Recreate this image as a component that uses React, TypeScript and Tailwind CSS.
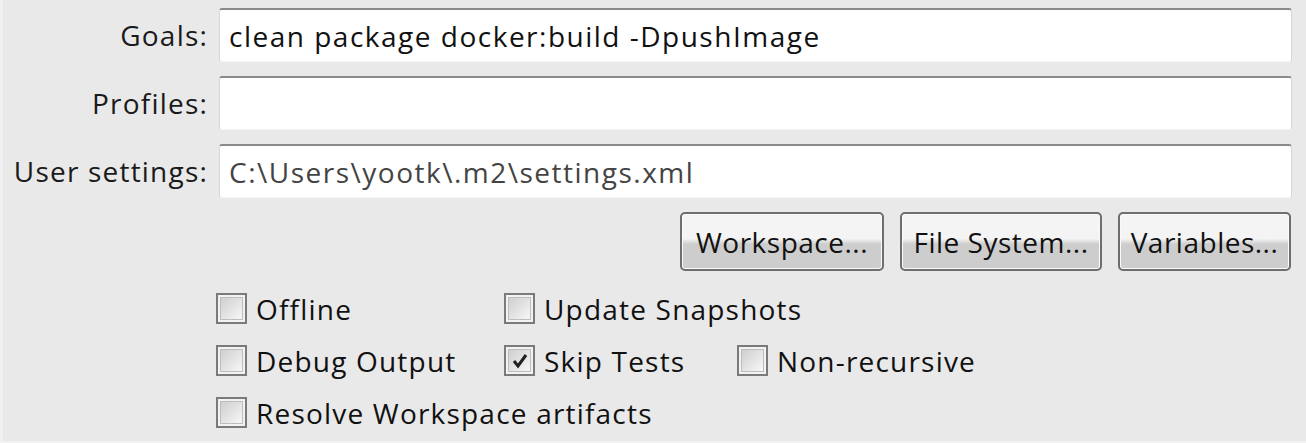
import React from 'react';

const font = { fontFamily: '"Open Sans", "Noto Sans", sans-serif' };

function Field({ label, value, muted }: { label: string; value?: string; muted?: boolean }) {
  return (
    <div className="flex items-center h-[54px]">
      <div className="w-[206px] pr-[1px] text-right text-[28px] tracking-[1.2px] text-[#1a1a1a] whitespace-nowrap">{label}</div>
      <div className="ml-[10px] flex-1 h-full bg-white border-t-2 border-t-[#8a8a8a] border-x border-x-[#d8d8d8] border-b border-b-[#f4f4f4] rounded-[3px] flex items-center px-[9px]">
        <span className={`text-[28px] tracking-[1.5px] whitespace-nowrap ${muted ? 'text-[#444]' : 'text-[#111]'}`}>{value}</span>
      </div>
    </div>
  );
}

function Btn({ label, w }: { label: string; w: string }) {
  return (
    <button
      className={`${w} h-[59px] rounded-[5px] border-2 border-[#6e6e6e] text-[28px] tracking-[0.5px] text-[#111] whitespace-nowrap bg-gradient-to-b from-[#f4f4f4] from-45% to-[#cdcdcd] to-55% shadow-[inset_0_0_0_1px_#fafafa]`}
    >
      {label}
    </button>
  );
}

function Check({ label, checked }: { label: string; checked?: boolean }) {
  return (
    <div className="flex items-center gap-[9px] h-[31px]">
      <div className="w-[31px] h-[31px] shrink-0 border-2 border-[#7a7a7a] p-[2px] bg-[#f2f2f2]">
        <div className="w-full h-full border border-[#bdbdbd] bg-gradient-to-br from-[#cfcfcf] to-[#f7f7f7] flex items-center justify-center">
          {checked && (
            <svg width="18" height="18" viewBox="0 0 18 18">
              <path d="M3 9 L7 14 L15 3" stroke="#222" strokeWidth="3" fill="none" />
            </svg>
          )}
        </div>
      </div>
      <span className="text-[28px] tracking-[1.2px] text-[#111] whitespace-nowrap">{label}</span>
    </div>
  );
}

export default function App() {
  return (
    <div className="w-[1306px] h-[443px] bg-[#e9e9e9] overflow-hidden border-l-[3px] border-l-[#f0f0f0] border-b-2 border-b-[#f2f2f2]" style={font}>
      <div className="pt-[8px] pr-[14px] flex flex-col gap-[14px]">
        <Field label="Goals:" value="clean package docker:build -DpushImage" />
        <Field label="Profiles:" />
        <Field label="User settings:" value="C:\Users\yootk\.m2\settings.xml" muted />
      </div>
      <div className="mt-[14px] pr-[15px] flex justify-end gap-[16px]">
        <Btn label="Workspace..." w="w-[204px]" />
        <Btn label="File System..." w="w-[202px]" />
        <Btn label="Variables..." w="w-[173px]" />
      </div>
      <div className="mt-[22px] ml-[213px] grid grid-cols-[288px_233px_auto] gap-y-[21px] w-fit">
        <Check label="Offline" />
        <Check label="Update Snapshots" />
        <div />
        <Check label="Debug Output" />
        <Check label="Skip Tests" checked />
        <Check label="Non-recursive" />
        <Check label="Resolve Workspace artifacts" />
      </div>
    </div>
  );
}
